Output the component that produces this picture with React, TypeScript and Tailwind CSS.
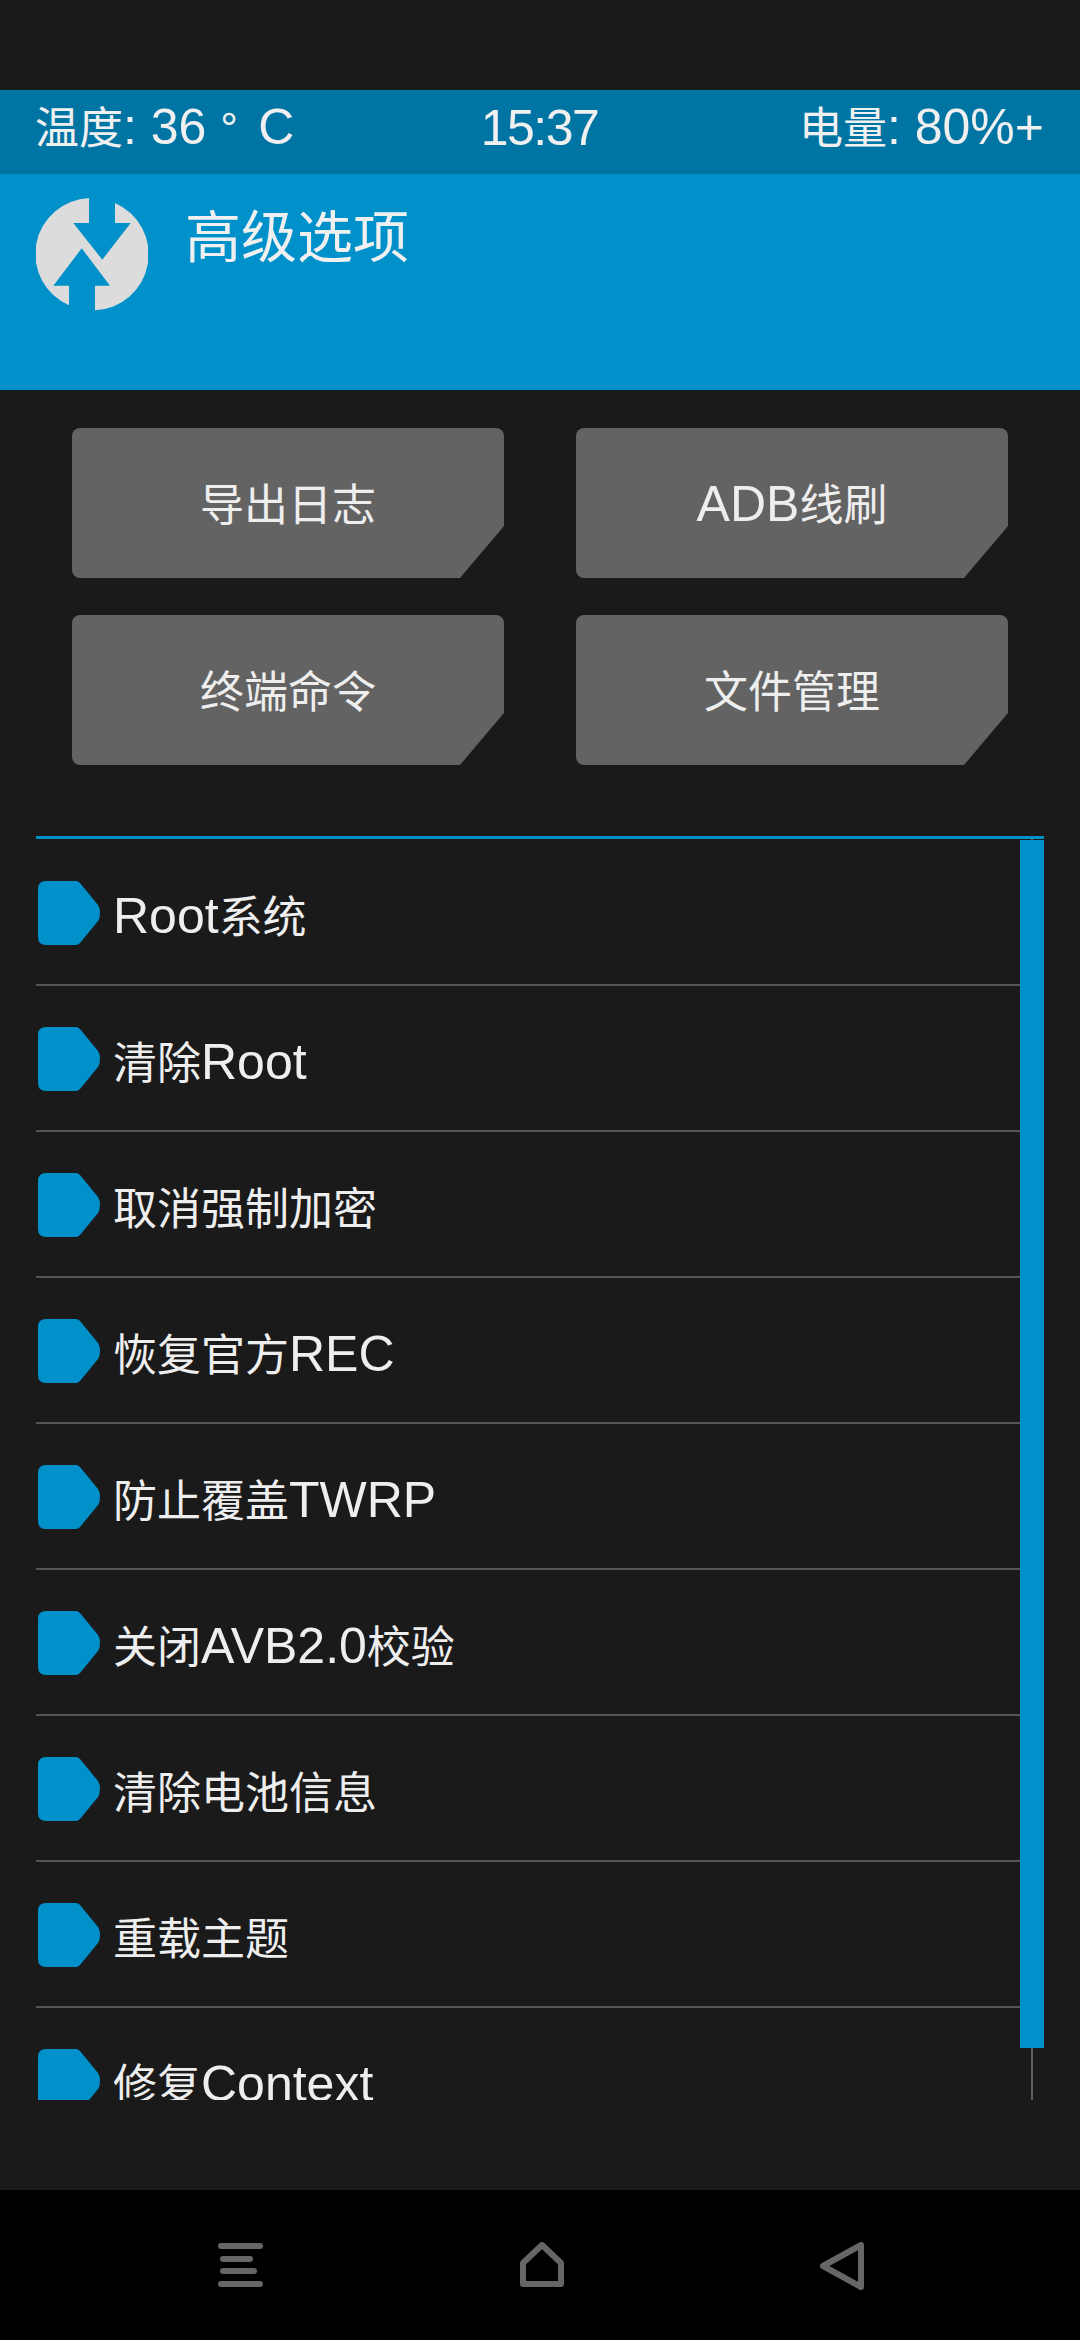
import React from 'react'

const FONT = "font-['Liberation_Sans','Noto_Sans_CJK_SC',sans-serif]"

const buttons = ['导出日志', 'ADB线刷', '终端命令', '文件管理']

const rows = [
  'Root系统',
  '清除Root',
  '取消强制加密',
  '恢复官方REC',
  '防止覆盖TWRP',
  '关闭AVB2.0校验',
  '清除电池信息',
  '重载主题',
  '修复Context',
]

// the latin runs sit visibly larger than the chinese ones on this screen
const Mixed = ({ text }: { text: string }) => (
  <>
    {text.split(/([\u4e00-\u9fff]+)/).map((part, i) =>
      i % 2 === 1 ? (
        <span key={i} className="text-[44px]">
          {part}
        </span>
      ) : (
        <span key={i}>{part}</span>
      ),
    )}
  </>
)

const TwrpLogo = () => (
  <svg width="112" height="113" viewBox="0 0 112 113" className="shrink-0">
    <path
      fill="#dcdcdc"
      d="M53 0 V25 H37.300 L66.300 61.700 L94.700 25 H79 V5 A56 56 0 0 1 59 112.300 V87.700 H74 L45.700 50.300 L17.300 87.700 H33 V107.300 A56 56 0 0 1 53 0 Z"
    />
  </svg>
)

const RowTag = () => (
  <svg width="62" height="64" viewBox="0 0 62 64" className="mt-[2px] shrink-0">
    <path
      fill="#0090ca"
      d="M8 0 H38 Q40 0 42 2 L60 24 Q62 27 62 32 Q62 37 60 40 L42 62 Q40 64 38 64 H8 Q0 64 0 56 V8 Q0 0 8 0 Z"
    />
  </svg>
)

const ActionButton = ({ label }: { label: string }) => (
  <div className="flex h-[150px] items-center justify-center rounded-lg bg-[#636363] text-[50px] leading-[60px] text-[#eeeeee] [clip-path:polygon(0_0,100%_0,100%_calc(100%-52px),calc(100%-44px)_100%,0_100%)]">
    <span className="pt-[4px]">
      <Mixed text={label} />
    </span>
  </div>
)

const NavBar = () => (
  <div className="flex h-[150px] shrink-0 items-start justify-between bg-black pl-[218px] pr-[216px] pt-[52px]">
    <svg width="46" height="46" viewBox="0 0 46 46" fill="none" stroke="#666666" strokeWidth="6" strokeLinecap="round">
      <path d="M3 4H42M5 17H32M5 29H36M3 42H42" />
    </svg>
    <svg width="44" height="46" viewBox="0 0 44 46" fill="none" stroke="#666666" strokeWidth="6" strokeLinejoin="round">
      <path d="M22 3 L41 21 V42 H3 V21 Z" />
    </svg>
    <svg width="44" height="48" viewBox="0 0 44 48" fill="none" stroke="#666666" strokeWidth="6" strokeLinejoin="round">
      <path d="M41 3 V45 L3 24 Z" />
    </svg>
  </div>
)

export default function App() {
  return (
    <div className={`flex h-[2340px] w-[1080px] flex-col overflow-hidden bg-[#1a1a1a] ${FONT}`}>
      <div className="h-[90px] shrink-0" />

      <div className="grid h-[84px] shrink-0 grid-cols-3 items-center bg-[#0075a4] pb-[8px] pl-[35px] pr-[36px] text-[50px] leading-[60px] text-[#f0f0f0]">
        <span>
          <Mixed text="温度: " />36 <span className="inline-block w-[38px] text-[44px]">°</span>C
        </span>
        <span className="text-center tracking-[-1.5px]">15:37</span>
        <span className="text-right">
          <Mixed text="电量: 80%+" />
        </span>
      </div>

      <div className="flex h-[216px] shrink-0 items-start gap-[37px] bg-[#0090ca] pl-[36px] pt-[24px]">
        <TwrpLogo />
        <span className="text-[56px] leading-[80px] text-[#f0f0f0]">高级选项</span>
      </div>

      <div className="grid shrink-0 grid-cols-2 gap-x-[72px] gap-y-[37px] px-[72px] pt-[38px]">
        {buttons.map((label) => (
          <ActionButton key={label} label={label} />
        ))}
      </div>

      <div className="relative mx-[36px] mt-[71px] h-[1264px] shrink-0 overflow-hidden border-t-[3px] border-[#0090ca] pt-[1px]">
        {rows.map((label) => (
          <div
            key={label}
            className="flex h-[146px] items-center gap-[13px] border-b-2 border-[#555555] pl-[2px] pr-[24px] text-[50px] leading-[60px] text-[#eeeeee]"
          >
            <RowTag />
            <span className="pt-[10px]">
              <Mixed text={label} />
            </span>
          </div>
        ))}
        <div className="absolute right-[11px] top-0 h-full w-[2px] bg-[#5c5c5c]" />
        <div className="absolute right-0 top-[1px] h-[1208px] w-[24px] bg-[#0090ca]" />
      </div>

      <div className="min-h-0 flex-1" />
      <NavBar />
    </div>
  )
}
